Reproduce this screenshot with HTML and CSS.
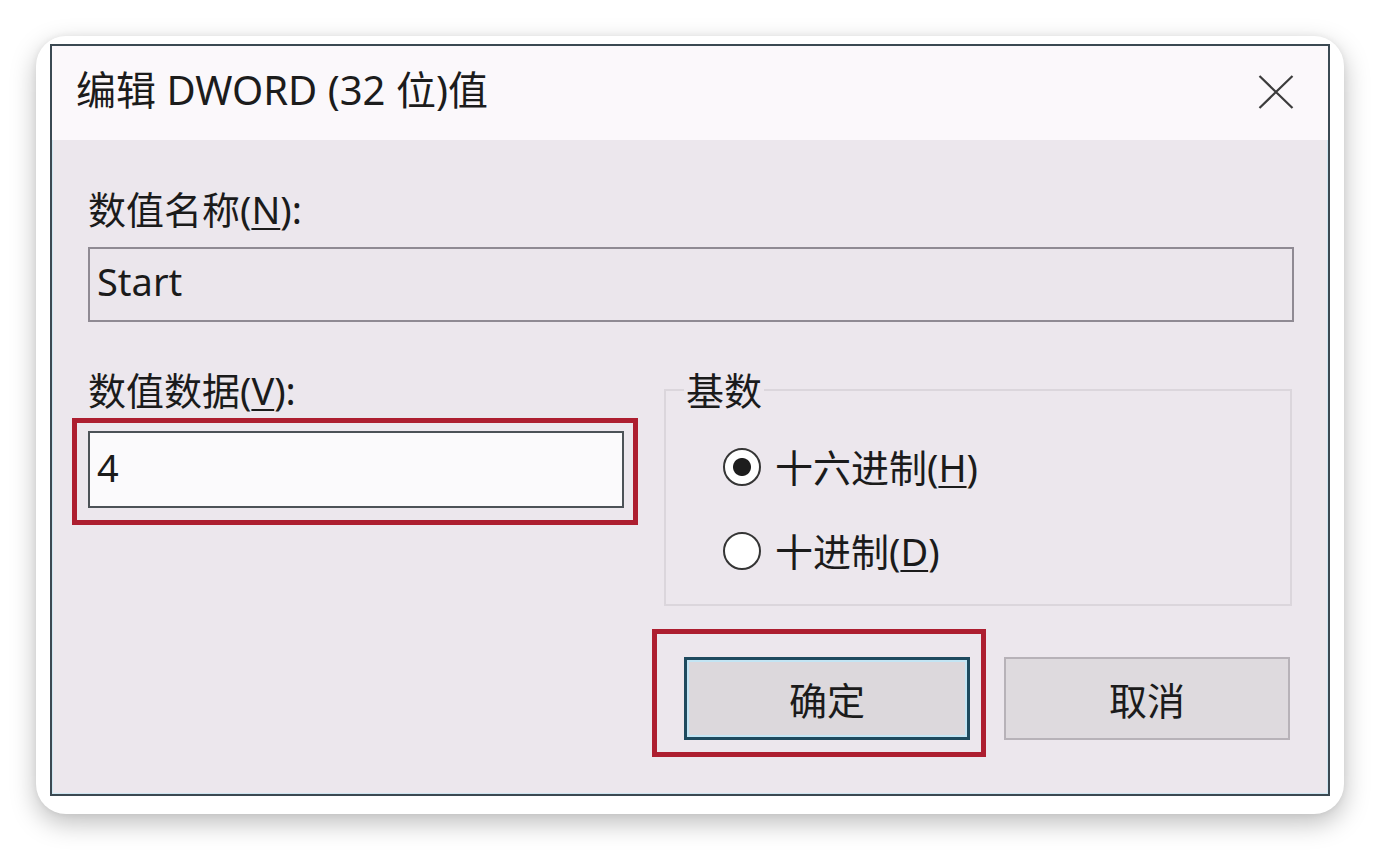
FILE: index.html
```html
<!DOCTYPE html>
<html lang="zh-CN">
<head>
<meta charset="utf-8">
<title>编辑 DWORD (32 位)值</title>
<link rel="stylesheet" href="styles.css">
</head>
<body>
<div class="page">
  <div class="card">
    <div class="dialog">
      <div class="titlebar">
        <span class="title">编辑 DWORD (32 位)值</span>
        <svg class="close" width="36" height="34" viewBox="0 0 36 34" aria-label="关闭">
          <path d="M1.5 1L34.5 33M34.5 1L1.5 33" stroke="#3c3c3c" stroke-width="2.2" fill="none"/>
        </svg>
      </div>
      <div class="content">
        <div class="label">数值名称(<u>N</u>):</div>
        <div class="field field-name">Start</div>
        <div class="row">
          <div class="col-left">
            <div class="label">数值数据(<u>V</u>):</div>
            <div class="highlight hl-input">
              <div class="field field-data">4</div>
            </div>
          </div>
          <div class="col-right">
            <fieldset class="group">
              <legend>基数</legend>
              <div class="radio"><span class="circle checked"></span><span>十六进制(<u>H</u>)</span></div>
              <div class="radio second"><span class="circle"></span><span>十进制(<u>D</u>)</span></div>
            </fieldset>
            <div class="buttons">
              <div class="highlight hl-btn">
                <button class="btn primary">确定</button>
              </div>
              <button class="btn">取消</button>
            </div>
          </div>
        </div>
      </div>
    </div>
  </div>
</div>
</body>
</html>
```

FILE: styles.css
```css
* { box-sizing: border-box; }

html, body {
  margin: 0;
  padding: 0;
  background: #ffffff;
}

body {
  font-family: "Noto Sans", "Noto Sans CJK SC", sans-serif;
  color: #1b1b1b;
}

.page {
  width: 1380px;
  height: 850px;
  padding: 36px 36px 0 36px;
}

.card {
  width: 1308px;
  height: 778px;
  background: #ffffff;
  border-radius: 30px;
  box-shadow: 0 9px 26px rgba(0, 0, 0, 0.26), 0 0 6px rgba(0, 0, 0, 0.06);
  padding: 8px 14px 18px 14px;
}

.dialog {
  width: 1280px;
  height: 752px;
  border: 2px solid #3b4952;
  background: #ece7ed;
  box-shadow: inset 0 0 0 1px #cfe7f2;
  display: flex;
  flex-direction: column;
}

.titlebar {
  height: 94px;
  background: #fbf8fb;
  display: flex;
  align-items: center;
  justify-content: space-between;
  padding: 0 34px 6px 24px;
}

.title {
  font-size: 40px;
  line-height: 46px;
  color: #1c1c1c;
}

.close {
  display: block;
  margin-top: 4px;
}

.content {
  padding: 47px 34px 0 36px;
}

.label {
  font-size: 38px;
  line-height: 44px;
  height: 44px;
  white-space: nowrap;
}

u {
  text-decoration-thickness: 2px;
  text-underline-offset: 4px;
}

.field {
  font-size: 38px;
  display: flex;
  align-items: center;
  padding-left: 7px;
  color: #1b1b1b;
}

.field-name {
  margin-top: 16px;
  width: 1206px;
  height: 75px;
  border: 2px solid #8f8a93;
  background: #ebe6ec;
  padding-bottom: 7px;
}

.row {
  margin-top: 46px;
  display: grid;
  grid-template-columns: 536px 630px;
  column-gap: 40px;
  align-items: start;
}

.highlight {
  position: relative;
}

.highlight::after {
  content: "";
  position: absolute;
  border: 5px solid #ad1e30;
  pointer-events: none;
}

.hl-input {
  margin-top: 19px;
}

.hl-input::after {
  top: -13px;
  right: -14px;
  bottom: -17px;
  left: -16px;
}

.field-data {
  width: 536px;
  height: 77px;
  border: 2px solid #4c5257;
  background: #fbfafc;
  padding-bottom: 6px;
}

.group {
  margin: 0;
  width: 628px;
  border: 2px solid #dbd6dc;
  padding: 33px 0 31px 57px;
  min-width: 0;
}

.group legend {
  margin-left: -39px;
  padding: 0 2px;
  font-size: 38px;
  line-height: 44px;
  height: 44px;
}

.radio {
  display: flex;
  align-items: center;
  gap: 14px;
  height: 44px;
  font-size: 38px;
  line-height: 44px;
  white-space: nowrap;
}

.radio.second {
  margin-top: 40px;
}

.circle {
  width: 38px;
  height: 38px;
  border-radius: 50%;
  border: 2px solid #353535;
  background: #ffffff;
  flex: none;
}

.circle.checked {
  background: radial-gradient(circle, #1d1d1d 0 8.5px, #ffffff 9.5px);
}

.buttons {
  margin-top: 51px;
  padding-left: 20px;
  display: flex;
  gap: 34px;
}

.btn {
  width: 286px;
  height: 83px;
  font-family: "Noto Sans CJK SC", sans-serif;
  font-size: 38px;
  color: #1b1b1b;
  background: #dedade;
  border: 2px solid #b7b2b8;
  padding: 0;
  display: block;
}

.btn.primary {
  border: 3px solid #1e4a5e;
  box-shadow: inset 0 0 0 2px #c3e5f4;
  background: #dcd8dc;
}

.hl-btn::after {
  top: -28px;
  right: -16px;
  bottom: -17px;
  left: -32px;
}
```
